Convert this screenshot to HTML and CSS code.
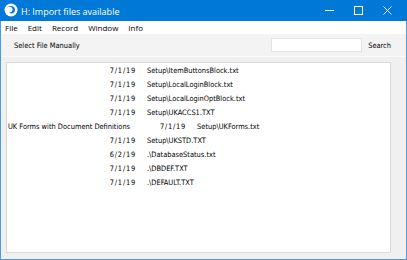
FILE: index.html
```html
<!DOCTYPE html>
<html>
<head>
<meta charset="utf-8">
<link rel="stylesheet" href="styles.css">
</head>
<body>
<div class="window">
  <div class="titlebar">
    <svg class="appicon" width="14" height="14" viewBox="0 0 14 14">
      <circle cx="7" cy="7" r="6.5" fill="#fff"/>
      <path d="M3 4.5 C5 3 8 3.5 8.5 6 C9 8.5 7 10 5 9.5 C7 11.5 11 10.5 11 7 C11 4.5 9 3 7 3 C5.5 3 4 3.5 3 4.5 Z" fill="#0078d7"/>
    </svg>
    <span class="title">H: Import files available</span>
    <div class="controls">
      <svg class="ctl" width="30" height="21" viewBox="0 0 30 21"><rect x="11" y="10" width="9" height="1" fill="#fff"/></svg>
      <svg class="ctl" width="30" height="21" viewBox="0 0 30 21"><rect x="10.5" y="6.5" width="8" height="8" fill="none" stroke="#fff"/></svg>
      <svg class="ctl" width="30" height="21" viewBox="0 0 30 21"><path d="M9.5 6.5 L17.5 14.5 M17.5 6.5 L9.5 14.5" stroke="#fff" stroke-width="1"/></svg>
    </div>
  </div>
  <div class="menubar">
    <span class="menu">File</span>
    <span class="menu">Edit</span>
    <span class="menu">Record</span>
    <span class="menu">Window</span>
    <span class="menu">Info</span>
  </div>
  <div class="toolbar">
    <span class="tbtext">Select File Manually</span>
    <div class="search">
      <input class="searchbox" type="text">
      <span class="tbtext">Search</span>
    </div>
  </div>
  <div class="content">
    <div class="listbox">
      <div class="row"><span class="desc"></span><span class="date">7/1/19</span><span class="path">Setup\ItemButtonsBlock.txt</span></div>
      <div class="row"><span class="desc"></span><span class="date">7/1/19</span><span class="path">Setup\LocalLoginBlock.txt</span></div>
      <div class="row"><span class="desc"></span><span class="date">7/1/19</span><span class="path">Setup\LocalLoginOptBlock.txt</span></div>
      <div class="row"><span class="desc"></span><span class="date">7/1/19</span><span class="path">Setup\UKACCS1.TXT</span></div>
      <div class="row"><span class="desc">UK Forms with Document Definitions</span><span class="date">7/1/19</span><span class="path">Setup\UKForms.txt</span></div>
      <div class="row"><span class="desc"></span><span class="date">7/1/19</span><span class="path">Setup\UKSTD.TXT</span></div>
      <div class="row"><span class="desc"></span><span class="date">6/2/19</span><span class="path">.\DatabaseStatus.txt</span></div>
      <div class="row"><span class="desc"></span><span class="date">7/1/19</span><span class="path">.\DBDEF.TXT</span></div>
      <div class="row"><span class="desc"></span><span class="date">7/1/19</span><span class="path">.\DEFAULT.TXT</span></div>
    </div>
  </div>
</div>
</body>
</html>
```
FILE: styles.css
```css
html, body {
  margin: 0;
  padding: 0;
}
body {
  width: 407px;
  height: 260px;
  overflow: hidden;
  font-family: "DejaVu Sans Condensed", "DejaVu Sans", sans-serif;
  font-size: 7.4px;
  color: #000;
}
.window {
  width: 407px;
  height: 260px;
  box-sizing: border-box;
  border: 1px solid #4a9be0;
  border-top: none;
  background: #f0f0f0;
  display: flex;
  flex-direction: column;
}
.titlebar {
  height: 21px;
  margin: 0 -1px;
  background: #0078d7;
  display: flex;
  align-items: center;
  color: #fff;
  flex-shrink: 0;
}
.appicon {
  margin-left: 4px;
  margin-top: -1px;
}
.title {
  margin-left: 3px;
  font-family: "Open Sans", "Noto Sans", sans-serif;
  font-size: 9px;
  margin-top: 1px;
}
.controls {
  margin-left: auto;
  display: flex;
  margin-right: 3px;
}
.ctl {
  display: block;
}
.menubar {
  height: 13px;
  background: #fff;
  display: flex;
  align-items: center;
  padding-left: 4px;
  gap: 10px;
  font-family: "Open Sans", "Noto Sans", sans-serif;
  font-size: 8px;
  flex-shrink: 0;
}
.toolbar {
  height: 23px;
  background: #f3f3f3;
  border-bottom: 1px solid #fbfbfb;
  display: flex;
  align-items: center;
  padding-left: 13px;
  box-sizing: border-box;
  flex-shrink: 0;
}
.search {
  margin-left: auto;
  display: flex;
  align-items: center;
  gap: 6px;
  margin-right: 15px;
}
.searchbox {
  width: 91px;
  height: 14px;
  box-sizing: border-box;
  border: 1px solid #e3e3e3;
  background: #fff;
  padding: 0;
  margin: 0;
}
.content {
  flex: 1;
  padding: 5px 15px 6px 5px;
  display: flex;
}
.listbox {
  flex: 1;
  background: #fff;
  border: 1px solid #d9d9d9;
  padding-left: 1px;
}
.row {
  height: 14px;
  display: flex;
  align-items: center;
  white-space: nowrap;
}
.desc {
  min-width: 72px;
}
.date {
  width: 56px;
  text-align: right;
  letter-spacing: 0.8px;
}
.path {
  margin-left: 11px;
}
```
